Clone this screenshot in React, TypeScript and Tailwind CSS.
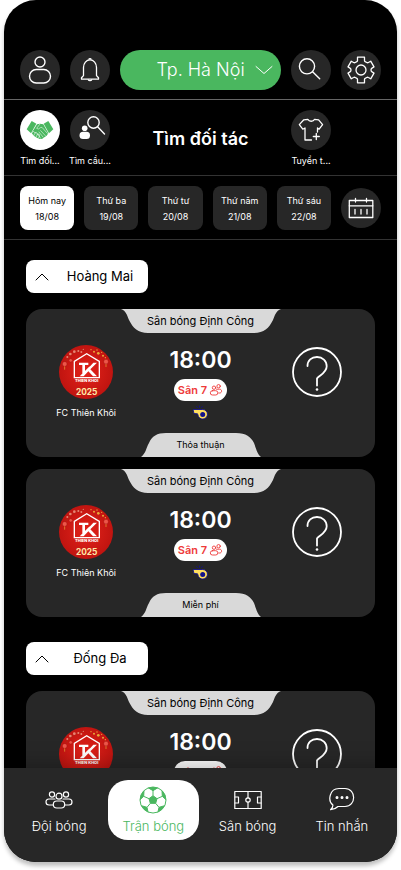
import React from "react";

type IconProps = { className?: string };

const line = {
  fill: "none",
  stroke: "currentColor",
  strokeLinecap: "round" as const,
  strokeLinejoin: "round" as const,
};

function UserIcon({ className }: IconProps) {
  return (
    <svg viewBox="0 0 40 40" className={className} aria-hidden="true" {...line} strokeWidth="1.4">
      <circle cx="20" cy="12" r="5" />
      <rect x="9.5" y="19.5" width="21" height="13.5" rx="6.7" />
    </svg>
  );
}

function BellIcon({ className }: IconProps) {
  return (
    <svg viewBox="0 0 40 40" className={className} aria-hidden="true" {...line} strokeWidth="1.3">
      <path d="M11.5 29.2v-1.4l2-2.2V17.5c0-4.400 2.800-7.600 6.500-7.600s6.500 3.200 6.500 7.600v8.100l2 2.200v1.400z" />
      <path d="M19 9.300c0-1 2-1 2 0M18.300 29.800c.5 1.200 2.900 1.200 3.400 0" />
    </svg>
  );
}

function SearchIcon({ className }: IconProps) {
  return (
    <svg viewBox="0 0 40 40" className={className} aria-hidden="true" {...line} strokeWidth="1.4">
      <circle cx="16" cy="16.3" r="7.6" />
      <path d="M21.600 21.700 28.700 28.700" />
    </svg>
  );
}

function GearIcon({ className }: IconProps) {
  return (
    <svg viewBox="0 0 40 40" className={className} aria-hidden="true" {...line} strokeWidth="1.3">
      <circle cx="20" cy="20" r="5" />
      <path d="M16.500 7.200h7v3.200q0 1 1 1.400l1.200.7q.9.500 1.700 0l2.300-1.300 3.300 5.700-2 1.200q-1 .6-1 1.900t1 1.900l2 1.200-3.300 5.700-2.300-1.300q-.8-.5-1.700 0l-1.200.7q-1 .4-1 1.400v3.200h-7v-3.200q0-1-1-1.400l-1.200-.7q-.9-.5-1.700 0l-2.300 1.300L7 23.100l2-1.200q1-.6 1-1.900t-1-1.900l-2-1.200 3.300-5.700 2.300 1.300q.8.500 1.700 0l1.200-.7q1-.4 1-1.400z" />
    </svg>
  );
}

function HandshakeIcon({ className }: IconProps) {
  return (
    <svg viewBox="0 0 120 120" className={className} aria-hidden="true">
      <g fill="#4ab75f">
        <path d="M35 33 49 41 33 70 20 58Z" />
        <path d="M85 33 71 41 87 70 100 58Z" />
        <path d="M51 43 60 41 70 43 85 70 80 77 73 82 66 87 59 87 50 83 41 77 35 69Z" />
      </g>
      <g fill="none" stroke="#fff" strokeWidth="1.600" strokeLinecap="round" strokeLinejoin="round">
        <path d="M60 42 50 55q5 5 11-2l5-1L82 70" />
        <path d="M62 62 76 77M57 66 69 81M52 71 62 85" />
        <path d="M36 68l5-4 4 5 4-2 4 6 4-1 2 6-4 7M41 77l5-9M48 82l4-9" />
      </g>
    </svg>
  );
}

function FindTeamIcon({ className }: IconProps) {
  return (
    <svg viewBox="0 0 40 40" className={className} aria-hidden="true" {...line} strokeWidth="1.4">
      <circle cx="23.5" cy="12.5" r="5.7" />
      <path d="M27.600 16.800 34.500 24" />
      <circle cx="14.700" cy="18.300" r="2.800" fill="currentColor" stroke="none" />
      <rect x="9.500" y="21.700" width="10.500" height="7.300" rx="3.500" fill="currentColor" stroke="none" />
    </svg>
  );
}

function ShirtIcon({ className }: IconProps) {
  return (
    <svg viewBox="0 0 40 40" className={className} aria-hidden="true" {...line} strokeWidth="1.3">
      <path d="M20.500 30H14V18l-2.200 1.200L8.300 14.600l4.500-4.800 4-.5c1.400 2.600 5.400 2.600 6.800 0l4 .5 4 4.800-3.500 4.600L26.500 18v4" />
      <path d="M25.300 23.500v6M22.300 26.500h6" />
    </svg>
  );
}

function CalendarIcon({ className }: IconProps) {
  return (
    <svg viewBox="0 0 40 40" className={className} aria-hidden="true" {...line} strokeWidth="1.3">
      <rect x="8.300" y="12.500" width="23.500" height="17" />
      <path d="M8.300 17.800h23.500M14.500 10.500v3.500M25.500 10.500v3.500M14 21.500v4.500M20 21.500v4.500M26 21.500v4.500" />
    </svg>
  );
}

function ChevronIcon({ className, up }: IconProps & { up?: boolean }) {
  return (
    <svg viewBox="0 0 18 10" className={className} aria-hidden="true" {...line} strokeWidth="1">
      <path d={up ? "M2 8 8 2l6 6" : "M1 1.500 9 8.500l8-7"} />
    </svg>
  );
}

function PlayersIcon({ className }: IconProps) {
  return (
    <svg viewBox="0 0 14 14" className={className} aria-hidden="true" {...line} strokeWidth="0.9">
      <circle cx="5" cy="4.700" r="1.700" />
      <circle cx="9.600" cy="3.200" r="1.700" />
      <rect x="1.300" y="7.700" width="7.500" height="4.300" rx="2.100" />
      <path d="M7.500 6.200h3.200c2.500 0 2.500 3.800 0 3.800h-1" />
    </svg>
  );
}

function WhistleIcon({ className }: IconProps) {
  return (
    <svg viewBox="0 0 16 16" className={className} aria-hidden="true">
      <path
        d="M1 4.500h9.700a4.800 4.800 0 1 1-4.800 5.300L5.500 8.800 2 8.500Z"
        fill="#ffdf5e"
        stroke="#12128c"
        strokeWidth="0.9"
        strokeLinejoin="round"
      />
      <circle cx="10.700" cy="9.400" r="2.500" fill="#12128c" />
      <path d="M4.500 1.200 5.500 3M7.500 0.500v2.300M10.300 1.200 9.500 3" stroke="#12128c" strokeWidth="0.9" />
    </svg>
  );
}

function QuestionIcon({ className }: IconProps) {
  return (
    <svg viewBox="0 0 50 50" className={className} aria-hidden="true" {...line} strokeWidth="1.8">
      <circle cx="25" cy="25" r="24" />
      <path d="M15.500 19C15.500 13.500 19.500 10 25 10s9.700 3.800 9.700 9.300c0 6-5.700 8.200-9.700 12V38.500" />
      <circle cx="25" cy="42.500" r="1.300" fill="currentColor" stroke="none" />
    </svg>
  );
}

function ClubLogo({ className }: IconProps) {
  return (
    <svg viewBox="0 0 162 162" className={className} role="img" aria-label="FC Thiên Khôi">
      <defs>
        <radialGradient id="club-red" cx="50%" cy="50%" r="50%">
          <stop offset="0" stopColor="#e3231a" />
          <stop offset="1" stopColor="#c01410" />
        </radialGradient>
      </defs>
      <circle cx="81" cy="81" r="81" fill="url(#club-red)" />
      <path d="M20 48Q35 20 76 12" fill="none" stroke="#a5301c" strokeWidth="2" />
      <g fill="#e88472">
        <circle cx="25" cy="36" r="3" />
        <circle cx="34" cy="27" r="4" />
        <circle cx="46" cy="20" r="4" />
        <circle cx="58" cy="18" r="3" />
        <circle cx="67" cy="21" r="3" />
        <circle cx="73" cy="13" r="2" />
      </g>
      <g fill="#e9a93a">
        <circle cx="96" cy="14" r="2" />
        <circle cx="105" cy="20" r="3" />
        <circle cx="114" cy="15" r="2" />
        <circle cx="118" cy="25" r="4" />
        <circle cx="128" cy="22" r="2" />
        <circle cx="132" cy="32" r="3" />
        <circle cx="139" cy="38" r="2" />
      </g>
      <g fill="#ed5549" stroke="#8f1310" strokeWidth="1">
        <circle cx="17" cy="57" r="7" />
        <circle cx="35" cy="46" r="5" />
        <circle cx="141" cy="50" r="7" />
      </g>
      <path d="M17 64v10M141 57v9" stroke="#e9a93a" strokeWidth="2" />
      <path d="M46 98V49L83 26l38 23v49Z" fill="none" stroke="#fff" strokeWidth="4" />
      <path d="M60 53h28v7H78v25l-8 7V60H60ZM92 53v12l11-12h11L94 73l20 21h-12L88 79 74 94H62l30-30Z" fill="#fff" />
      <text x="83" y="111" textAnchor="middle" fill="#fff" fontSize="12" fontWeight="800">
        THIEN KHOI
      </text>
      <text x="83" y="150" textAnchor="middle" fill="#ffe9a8" fontSize="25" fontWeight="700">
        2025
      </text>
    </svg>
  );
}

function TeamIcon({ className }: IconProps) {
  return (
    <svg viewBox="0 0 28 28" className={className} aria-hidden="true" {...line} strokeWidth="1.2">
      <circle cx="7" cy="8.500" r="2.600" />
      <circle cx="21" cy="8.500" r="2.600" />
      <circle cx="14" cy="10.200" r="3" />
      <rect x="8.300" y="15" width="11.400" height="7" rx="3.500" />
      <path d="M10 13H4c-4 0-4 6 0 6h4M18 13h6c4 0 4 6 0 6h-4" />
    </svg>
  );
}

function BallIcon({ className }: IconProps) {
  return (
    <svg viewBox="0 0 84 84" className={className} aria-hidden="true">
      <defs>
        <clipPath id="ball-edge">
          <circle cx="42" cy="42" r="39" />
        </clipPath>
      </defs>
      <g clipPath="url(#ball-edge)" fill="currentColor" stroke="currentColor" strokeWidth="3" strokeLinejoin="round">
        <path d="M42 29 54 38 50 52H34L30 38Z" />
        <path d="M42 14 27 5V0h30v5ZM70 31 84 44V22L69 14ZM60 64 56 82 80 70 77 59ZM24 64 28 82 4 70 7 59ZM14 31 0 44V22L15 14Z" />
        <path d="M42 29V14M54 38 70 31M50 52 60 64M34 52 24 64M30 38 14 31" />
      </g>
      <circle cx="42" cy="42" r="39" fill="none" stroke="currentColor" strokeWidth="3" />
    </svg>
  );
}

function PitchIcon({ className }: IconProps) {
  return (
    <svg viewBox="0 0 28 28" className={className} aria-hidden="true" {...line} strokeWidth="1.2">
      <rect x="0.800" y="5.500" width="26.400" height="17" />
      <path d="M14 5.500v6.300M14 16.200v6.300M1 11h3.500v6H1M27 11h-3.500v6H27" />
      <circle cx="14" cy="14" r="2.200" />
    </svg>
  );
}

function ChatIcon({ className }: IconProps) {
  return (
    <svg viewBox="0 0 28 28" className={className} aria-hidden="true" {...line} strokeWidth="1.2">
      <path d="M11 2.500h6c11.500 0 11.500 18 0 18h-7q-2.500 2.700-7.500 3.200 2.500-1.700 2.400-4.600C-.5 15 1.300 2.500 11 2.500Z" />
      <circle cx="9" cy="11.600" r="0.900" fill="currentColor" />
      <circle cx="14" cy="11.600" r="0.900" fill="currentColor" />
      <circle cx="19" cy="11.600" r="0.900" fill="currentColor" />
    </svg>
  );
}

function RoundButton({ label, children }: { label: string; children: React.ReactNode }) {
  return (
    <button type="button" aria-label={label} className="size-10 shrink-0 rounded-full bg-[#272727] text-white">
      {children}
    </button>
  );
}

function ModeButton({ label, active, children }: { label: string; active?: boolean; children: React.ReactNode }) {
  return (
    <button type="button" aria-pressed={!!active} className="flex w-10 shrink-0 flex-col items-center gap-[5px]">
      <span className={active ? "block size-10 rounded-full bg-white" : "block size-10 rounded-full bg-[#272727]"}>
        {children}
      </span>
      <span className="whitespace-nowrap text-[9px] leading-3">{label}</span>
    </button>
  );
}

const days = [
  { day: "Hôm nay", date: "18/08", active: true },
  { day: "Thứ ba", date: "19/08" },
  { day: "Thứ tư", date: "20/08" },
  { day: "Thứ năm", date: "21/08" },
  { day: "Thứ sáu", date: "22/08" },
];

const districts = [
  { name: "Hoàng Mai", matches: ["Thỏa thuận", "Miễn phí"] },
  { name: "Đống Đa", matches: ["Thỏa thuận"] },
];

function MatchCard({ fee }: { fee: string }) {
  return (
    <article className="flex h-[148px] flex-col items-center overflow-hidden rounded-2xl bg-[#272727]">
      <div className="grid h-6 w-40 shrink-0 place-items-center text-black">
        <svg viewBox="0 0 160 24" className="col-start-1 row-start-1 h-6 w-40" aria-hidden="true">
          <path d="M0 0C5 2 6 6 8 11C12 19 17 24 27 24H133C143 24 148 19 152 11C154 6 155 2 160 0Z" fill="#d9d9d9" />
        </svg>
        <h3 className="col-start-1 row-start-1 text-[11px] leading-4">Sân bóng Định Công</h3>
      </div>
      <div className="grid w-full flex-1 grid-cols-3 pt-3">
        <div className="flex flex-col items-center gap-2 pl-1">
          <ClubLogo className="size-[54px]" />
          <p className="text-[9px] leading-3">FC Thiên Khôi</p>
        </div>
        <div className="flex flex-col items-center">
          <p className="text-[23px] font-semibold leading-[30px]">18:00</p>
          <p className="mt-1 flex h-[22px] items-center gap-0.5 rounded-full bg-white px-1 text-[11px] font-semibold text-[#ee3a3a]">
            Sân 7
            <PlayersIcon className="size-3.5" />
          </p>
          <WhistleIcon className="mt-1 size-4" />
        </div>
        <div className="flex justify-center pt-0.5">
          <QuestionIcon className="size-[50px]" />
        </div>
      </div>
      <div className="grid h-6 w-[120px] shrink-0 place-items-center text-black">
        <svg viewBox="0 0 120 24" className="col-start-1 row-start-1 h-6 w-[120px]" aria-hidden="true">
          <path d="M0 24C5 20 5 15 8 10C11 3 16 0 25 0H95C105 0 110 4 113 10C115 15 116 21 120 24Z" fill="#d9d9d9" />
        </svg>
        <p className="col-start-1 row-start-1 text-[9px] leading-3">{fee}</p>
      </div>
    </article>
  );
}

const tabs = [
  { label: "Đội bóng", Icon: TeamIcon },
  { label: "Trận bóng", Icon: BallIcon, active: true },
  { label: "Sân bóng", Icon: PitchIcon },
  { label: "Tin nhắn", Icon: ChatIcon },
];

export default function App() {
  return (
    <div className="h-screen bg-white px-1 pb-2 font-['Inter','Liberation_Sans',sans-serif]">
      <div className="flex h-full flex-col overflow-hidden rounded-[32px] bg-black text-white shadow-[0_4px_4px_rgba(0,0,0,0.25)]">
        <header className="flex shrink-0 items-center gap-2.5 border-b border-[#666] px-4 pb-[9px] pt-[50px]">
          <RoundButton label="Tài khoản">
            <UserIcon className="size-10" />
          </RoundButton>
          <RoundButton label="Thông báo">
            <BellIcon className="size-10" />
          </RoundButton>
          <div className="relative min-w-0 flex-1">
            <select
              aria-label="Thành phố"
              className="h-10 w-full appearance-none rounded-full bg-[#4ab75f] text-center text-lg font-light text-white [text-align-last:center]"
            >
              <option>Tp. Hà Nội</option>
            </select>
            <ChevronIcon className="pointer-events-none absolute right-2 top-[15px] h-2.5 w-[18px]" />
          </div>
          <RoundButton label="Tìm kiếm">
            <SearchIcon className="size-10" />
          </RoundButton>
          <RoundButton label="Cài đặt">
            <GearIcon className="size-10" />
          </RoundButton>
        </header>

        <section className="flex shrink-0 items-center gap-2.5 border-b border-[#333] px-4 pb-2 pt-2.5">
          <ModeButton label="Tìm đối..." active>
            <HandshakeIcon className="size-10" />
          </ModeButton>
          <ModeButton label="Tìm cầu...">
            <FindTeamIcon className="size-10" />
          </ModeButton>
          <h1 className="flex-1 whitespace-nowrap text-center text-lg font-semibold">Tìm đối tác</h1>
          <ModeButton label="Tuyển t...">
            <ShirtIcon className="size-10" />
          </ModeButton>
          <span className="w-10 shrink-0" />
        </section>

        <section className="flex shrink-0 items-center gap-2.5 border-b border-[#333] px-4 pb-[9px] pt-2.5">
          {days.map(({ day, date, active }) => (
            <button
              key={date}
              type="button"
              aria-pressed={!!active}
              className={
                active
                  ? "flex h-11 min-w-0 flex-1 flex-col items-center justify-center whitespace-nowrap rounded-lg bg-white pt-0.5 text-[9px] leading-4 text-black"
                  : "flex h-11 min-w-0 flex-1 flex-col items-center justify-center whitespace-nowrap rounded-lg bg-[#272727] pt-0.5 text-[9px] leading-4 text-white"
              }
            >
              <span>{day}</span>
              <span>{date}</span>
            </button>
          ))}
          <RoundButton label="Chọn ngày">
            <CalendarIcon className="size-10" />
          </RoundButton>
        </section>

        <main className="flex min-h-0 flex-1 flex-col gap-[25px] overflow-y-auto px-[22px] pt-5 [scrollbar-width:none]">
          {districts.map(({ name, matches }) => (
            <section key={name} className="shrink-0">
              <button
                type="button"
                aria-expanded="true"
                className="flex h-[33px] w-[122px] items-center rounded-lg bg-white px-2 text-[13px] text-black"
              >
                <ChevronIcon up className="h-2.5 w-[18px] shrink-0" />
                <span className="flex-1 whitespace-nowrap pl-2 text-center">{name}</span>
              </button>
              <div className="mt-4 flex flex-col gap-3">
                {matches.map((fee) => (
                  <MatchCard key={fee} fee={fee} />
                ))}
              </div>
            </section>
          ))}
        </main>

        <nav className="relative flex h-[94px] shrink-0 gap-1 bg-[#272727] px-2.5 pt-3 shadow-[0_-4px_20px_rgba(0,0,0,0.25)]">
          {tabs.map(({ label, Icon, active }) => (
            <a
              key={label}
              href="#"
              aria-current={active ? "page" : undefined}
              className={
                active
                  ? "flex h-[60px] flex-1 flex-col items-center gap-1 rounded-[20px] bg-white pt-1.5 text-[13px] font-light leading-4 text-[#4ab75f]"
                  : "flex h-[60px] flex-1 flex-col items-center gap-1 rounded-[20px] pt-1.5 text-[13px] font-light leading-4 text-white"
              }
            >
              <Icon className="size-7" />
              <span className="whitespace-nowrap">{label}</span>
            </a>
          ))}
        </nav>
      </div>
    </div>
  );
}
